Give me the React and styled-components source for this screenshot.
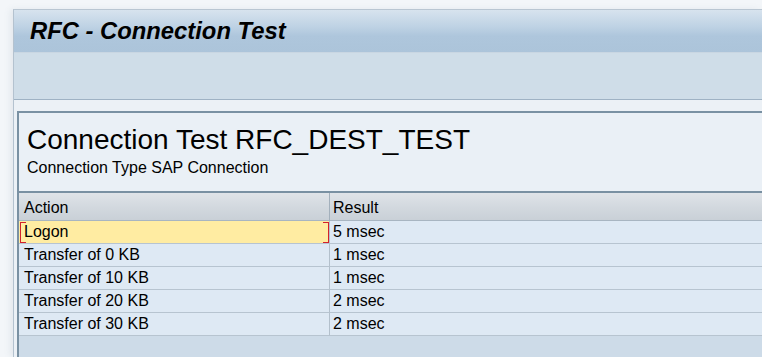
import React from "react";
import styled, { createGlobalStyle } from "styled-components";

const GlobalStyle = createGlobalStyle`
  *, *::before, *::after { box-sizing: border-box; }
  html, body { margin: 0; padding: 0; }
  body {
    background: #f3f6f9;
    font-family: "Liberation Sans", Arial, sans-serif;
    color: #000;
  }
`;

const Screen = styled.div`
  height: 357px;
  padding: 9px 0 0 13px;
  display: flex;
  flex-direction: column;
  overflow: hidden;
`;

const Frame = styled.div`
  flex: 1;
  min-height: 0;
  display: flex;
  flex-direction: column;
  border-left: 1px solid #b4c2cf;
  border-top: 1px solid #b9c6d2;
  background: #ecf1f6;
  box-shadow: -3px 0 6px rgba(120, 140, 160, 0.12);
`;

const TitleBar = styled.header`
  flex: none;
  height: 43px;
  display: flex;
  align-items: center;
  padding: 0 0 1px 16px;
  background: linear-gradient(
    to bottom,
    #d7e3ee 0%,
    #bed2e4 40%,
    #aec6dc 62%,
    #acc4da 100%
  );
  border-bottom: 1px solid #c9d6e2;
`;

const Title = styled.h1`
  margin: 0;
  font-size: 23.8px;
  font-weight: bold;
  font-style: italic;
  line-height: 1;
  color: #000;
`;

const Toolbar = styled.div`
  flex: none;
  height: 47px;
  background: #cfdde8;
  border-bottom: 1px solid #9fb2c4;
`;

const Content = styled.main`
  flex: 1;
  min-height: 0;
  margin: 11px 0 0 3px;
  display: flex;
  flex-direction: column;
  border-top: 2px solid #7a91a3;
  border-left: 2px solid #7a91a3;
  background: #cddbe8;
`;

const HeaderPanel = styled.section`
  padding: 11px 0 13px 8px;
  background: #eaf0f6;
`;

const Heading = styled.h2`
  margin: 0;
  font-size: 28px;
  font-weight: normal;
  line-height: 32px;
  white-space: nowrap;
`;

const SubHeading = styled.div`
  margin-top: 2px;
  font-size: 16px;
  line-height: 20px;
  white-space: nowrap;
`;

const Table = styled.div`
  display: grid;
  grid-template-columns: 311px 1fr;
  border-top: 2px solid #7990a2;
  font-size: 16px;
`;

const HeadCell = styled.div`
  height: 28px;
  display: flex;
  align-items: center;
  padding: 3px 0 0 ${(p) => (p.$first ? "5px" : "3px")};
  background: linear-gradient(to bottom, #dfe3e8 0%, #d3d9df 50%, #c9d0d7 100%);
  border-bottom: 1px solid #a8b5c1;
  border-right: ${(p) => (p.$first ? "1px solid #a3b0bc" : "none")};
  white-space: nowrap;
`;

const Cell = styled.div`
  position: relative;
  height: 23px;
  display: flex;
  align-items: center;
  padding-left: ${(p) => (p.$first ? "5px" : "3px")};
  background: ${(p) => (p.$focus ? "#ffeca2" : "#dee9f4")};
  border-bottom: 1px solid #b7c4d0;
  border-right: ${(p) => (p.$first ? "1px solid #b3c0cc" : "none")};
  white-space: nowrap;

  ${(p) =>
    p.$focus &&
    `
    &::before, &::after {
      content: "";
      position: absolute;
      top: 1px;
      bottom: 0;
      width: 6px;
      border-top: 1px solid #d3222c;
      border-bottom: 1px solid #d3222c;
    }
    &::before { left: 1px; border-left: 1px solid #d3222c; }
    &::after { right: 0; border-right: 1px solid #d3222c; }
  `}
`;

const rows = [
  ["Logon", "5 msec"],
  ["Transfer of 0 KB", "1 msec"],
  ["Transfer of 10 KB", "1 msec"],
  ["Transfer of 20 KB", "2 msec"],
  ["Transfer of 30 KB", "2 msec"],
];

export default function App() {
  return (
    <>
      <GlobalStyle />
      <Screen>
        <Frame>
          <TitleBar>
            <Title>RFC - Connection Test</Title>
          </TitleBar>
          <Toolbar />
          <Content>
            <HeaderPanel>
              <Heading>Connection Test RFC_DEST_TEST</Heading>
              <SubHeading>Connection Type SAP Connection</SubHeading>
            </HeaderPanel>
            <Table>
              <HeadCell $first>Action</HeadCell>
              <HeadCell>Result</HeadCell>
              {rows.map(([action, result], i) => (
                <React.Fragment key={action}>
                  <Cell $first $focus={i === 0}>
                    {action}
                  </Cell>
                  <Cell>{result}</Cell>
                </React.Fragment>
              ))}
            </Table>
          </Content>
        </Frame>
      </Screen>
    </>
  );
}
